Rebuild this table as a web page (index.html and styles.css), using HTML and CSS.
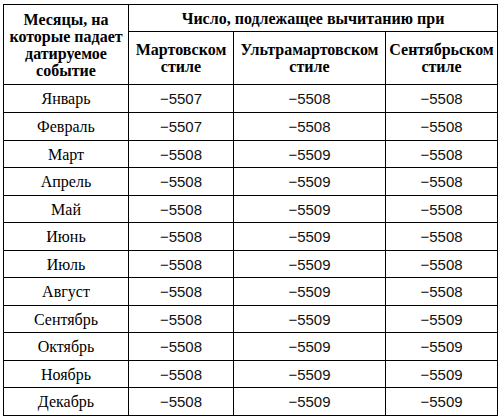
FILE: index.html
```html
<!DOCTYPE html>
<html lang="ru">
<head>
<meta charset="utf-8">
<link rel="stylesheet" href="styles.css">
</head>
<body>
<div class="wrap">
<table class="t">
<colgroup>
<col class="c1"><col class="c2"><col class="c3"><col class="c4">
</colgroup>
<thead>
<tr class="h1">
<th rowspan="2">Месяцы, на которые падает датируемое событие</th>
<th colspan="3">Число, подлежащее вычитанию при</th>
</tr>
<tr class="h2">
<th>Мартовском стиле</th>
<th>Ультрамартовском стиле</th>
<th>Сентябрьском стиле</th>
</tr>
</thead>
<tbody>
<tr class="r28"><td class="m">Январь</td><td>−5507</td><td>−5508</td><td>−5508</td></tr>
<tr class="r28"><td class="m">Февраль</td><td>−5507</td><td>−5508</td><td>−5508</td></tr>
<tr class="r27"><td class="m">Март</td><td>−5508</td><td>−5509</td><td>−5508</td></tr>
<tr class="r28"><td class="m">Апрель</td><td>−5508</td><td>−5509</td><td>−5508</td></tr>
<tr class="r27"><td class="m">Май</td><td>−5508</td><td>−5509</td><td>−5508</td></tr>
<tr class="r28"><td class="m">Июнь</td><td>−5508</td><td>−5509</td><td>−5508</td></tr>
<tr class="r27"><td class="m">Июль</td><td>−5508</td><td>−5509</td><td>−5508</td></tr>
<tr class="r28"><td class="m">Август</td><td>−5508</td><td>−5509</td><td>−5508</td></tr>
<tr class="r27"><td class="m">Сентябрь</td><td>−5508</td><td>−5509</td><td>−5509</td></tr>
<tr class="r28"><td class="m">Октябрь</td><td>−5508</td><td>−5509</td><td>−5509</td></tr>
<tr class="r27"><td class="m">Ноябрь</td><td>−5508</td><td>−5509</td><td>−5509</td></tr>
<tr class="r28"><td class="m">Декабрь</td><td>−5508</td><td>−5509</td><td>−5509</td></tr>
</tbody>
</table>
</div>
</body>
</html>
```

FILE: styles.css
```css
html, body {
  margin: 0;
  padding: 0;
  background: #ffffff;
}
.wrap {
  padding: 4px 3px 0 3px;
}
.t {
  border-collapse: collapse;
  table-layout: fixed;
  width: 494px;
  color: #000;
}
.c1 { width: 125px; }
.c2 { width: 105px; }
.c3 { width: 152px; }
.c4 { width: 112px; }
.t th, .t td {
  border: 1px solid #000;
  padding: 0 2px;
  text-align: center;
  vertical-align: middle;
}
.t th {
  font-family: "Liberation Serif", "Times New Roman", serif;
  font-weight: bold;
  font-size: 16px;
  line-height: 17px;
}
.h1 { height: 27px; }
.h2 { height: 53px; }
.t td {
  font-family: "Liberation Sans", Arial, sans-serif;
  font-size: 15px;
  line-height: 17px;
  color: #111;
}
.t td.m {
  font-family: "Liberation Serif", "Times New Roman", serif;
  font-size: 16px;
  color: #000;
}
.r28 { height: 28px; }
.r27 { height: 27px; }
```
